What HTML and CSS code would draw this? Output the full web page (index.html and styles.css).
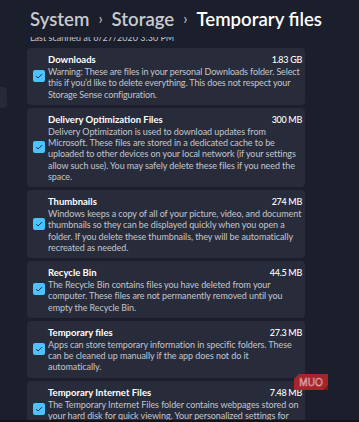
FILE: index.html
```html
<!DOCTYPE html>
<html lang="en">
<head>
    <meta charset="UTF-8">
    <meta name="viewport" content="width=device-width, initial-scale=1.0">
    <title>Temporary files</title>
    <link rel="stylesheet" href="styles.css">
</head>
<body>
    <div class="window">
        <aside class="nav">
            <div class="nav-item"></div>
        </aside>

        <main class="content">
            <h1 class="breadcrumb">
                <span class="crumb">System</span>
                <span class="chevron">&#8250;</span>
                <span class="crumb">Storage</span>
                <span class="chevron">&#8250;</span>
                <span class="crumb current">Temporary files</span>
            </h1>

            <div class="scan-info">
                <p>Last scanned at 6/27/2020 3:30 PM</p>
            </div>

            <div class="file-list">
                <div class="file-card">
                    <span class="check"><svg viewBox="0 0 12 12"><path d="M3.2 6.2 L5.1 8 L8.9 4.2"/></svg></span>
                    <div class="file-body">
                        <div class="file-head">
                            <span class="file-name">Downloads</span>
                            <span class="file-size">1.83 GB</span>
                        </div>
                        <p class="file-desc compact">Warning: These are files in your personal Downloads folder. Select this if you’d like to delete everything. This does not respect your Storage Sense configuration.</p>
                    </div>
                </div>

                <div class="file-card">
                    <span class="check"><svg viewBox="0 0 12 12"><path d="M3.2 6.2 L5.1 8 L8.9 4.2"/></svg></span>
                    <div class="file-body">
                        <div class="file-head">
                            <span class="file-name">Delivery Optimization Files</span>
                            <span class="file-size">300 MB</span>
                        </div>
                        <p class="file-desc">Delivery Optimization is used to download updates from Microsoft. These files are stored in a dedicated cache to be uploaded to other devices on your local network (if your settings allow such use). You may safely delete these files if you need the space.</p>
                    </div>
                </div>

                <div class="file-card">
                    <span class="check"><svg viewBox="0 0 12 12"><path d="M3.2 6.2 L5.1 8 L8.9 4.2"/></svg></span>
                    <div class="file-body">
                        <div class="file-head">
                            <span class="file-name">Thumbnails</span>
                            <span class="file-size">274 MB</span>
                        </div>
                        <p class="file-desc">Windows keeps a copy of all of your picture, video, and document thumbnails so they can be displayed quickly when you open a folder. If you delete these thumbnails, they will be automatically recreated as needed.</p>
                    </div>
                </div>

                <div class="file-card">
                    <span class="check"><svg viewBox="0 0 12 12"><path d="M3.2 6.2 L5.1 8 L8.9 4.2"/></svg></span>
                    <div class="file-body">
                        <div class="file-head">
                            <span class="file-name">Recycle Bin</span>
                            <span class="file-size">44.5 MB</span>
                        </div>
                        <p class="file-desc">The Recycle Bin contains files you have deleted from your computer. These files are not permanently removed until you empty the Recycle Bin.</p>
                    </div>
                </div>

                <div class="file-card">
                    <span class="check"><svg viewBox="0 0 12 12"><path d="M3.2 6.2 L5.1 8 L8.9 4.2"/></svg></span>
                    <div class="file-body">
                        <div class="file-head">
                            <span class="file-name">Temporary files</span>
                            <span class="file-size">27.3 MB</span>
                        </div>
                        <p class="file-desc">Apps can store temporary information in specific folders. These can be cleaned up manually if the app does not do it automatically.</p>
                    </div>
                </div>

                <div class="file-card">
                    <span class="check"><svg viewBox="0 0 12 12"><path d="M3.2 6.2 L5.1 8 L8.9 4.2"/></svg></span>
                    <div class="file-body">
                        <div class="file-head">
                            <span class="file-name">Temporary Internet Files</span>
                            <span class="file-size">7.48 MB</span>
                        </div>
                        <p class="file-desc">The Temporary Internet Files folder contains webpages stored on your hard disk for quick viewing. Your personalized settings for webpages will be left intact.</p>
                    </div>
                </div>
            </div>
        </main>

        <!-- watermark badge over the list -->
        <svg class="watermark" viewBox="0 0 34 16">
            <polygon points="5,0 34,0 34,16 0,16 0,5" fill="#a3262c"/>
            <polygon points="34,11 34,16 29,16" fill="#6e1a1f"/>
            <text x="17" y="12" text-anchor="middle">MUO</text>
        </svg>
    </div>
    <div class="taskbar"></div>
</body>
</html>
```

FILE: styles.css
```css
* {
    margin: 0;
    padding: 0;
    box-sizing: border-box;
}

body {
    font-family: Lato, 'Noto Sans', sans-serif;
    background: #1b1e2b;
    color: #fff;
    width: 359px;
    height: 422px;
    overflow: hidden;
}

.window {
    position: relative;
    display: flex;
    height: 420px;
    overflow: hidden;
}

.nav {
    width: 27px;
    flex-shrink: 0;
}

.nav-item {
    margin-top: 87px;
    width: 7px;
    height: 21px;
    background: #262a37;
    border-radius: 0 4px 4px 0;
}

.content {
    width: 278px;
}

.breadcrumb {
    display: flex;
    align-items: baseline;
    gap: 9px;
    padding: 5px 0 0 3px;
    height: 37px;
    font-family: Lato, 'Noto Sans', sans-serif;
    font-size: 18.6px;
    font-weight: 600;
    line-height: 28px;
    white-space: nowrap;
}

.crumb {
    color: #c9cad0;
}

.crumb.current {
    color: #fff;
}

.chevron {
    color: #c9cad0;
    font-size: 15px;
    font-weight: 400;
    position: relative;
    top: -2px;
}

.scan-info {
    height: 4px;
    margin-bottom: 7px;
    overflow: hidden;
    display: flex;
    align-items: flex-end;
    padding-left: 3px;
}

.scan-info p {
    font-size: 9px;
    line-height: 9px;
    color: #c5c7ce;
    margin-bottom: -1px;
}

.file-list {
    display: flex;
    flex-direction: column;
    gap: 3px;
}

.file-card {
    display: flex;
    align-items: center;
    gap: 3px;
    padding: 5px 3px 5px 6px;
    background: #282c3a;
    border-radius: 4px;
}

.check {
    width: 12px;
    height: 12px;
    flex-shrink: 0;
    background: #4cc2ff;
    border-radius: 2px;
    display: flex;
}

.check svg {
    width: 12px;
    height: 12px;
    fill: none;
    stroke: #1b2a3c;
    stroke-width: 1;
}

.file-body {
    flex: 1;
}

.file-head {
    display: flex;
    justify-content: space-between;
    align-items: baseline;
    line-height: 13px;
}

.file-name {
    font-size: 9.5px;
    font-weight: 700;
    color: #fff;
}

.file-size {
    font-size: 9px;
    font-weight: 500;
    color: #fff;
    letter-spacing: -0.3px;
}

.file-desc {
    font-size: 9px;
    letter-spacing: -0.08px;
    line-height: 11.25px;
    color: #c3c5cd;
}

.file-desc.compact {
    letter-spacing: -0.13px;
}

.watermark {
    position: absolute;
    left: 294px;
    top: 374px;
    width: 34px;
    height: 16px;
}

.watermark text {
    font-family: 'Liberation Sans', sans-serif;
    font-size: 10px;
    fill: none;
    stroke: #e8b8ba;
    stroke-width: 0.5;
}

.taskbar {
    height: 2px;
    background: #151515;
}
```
